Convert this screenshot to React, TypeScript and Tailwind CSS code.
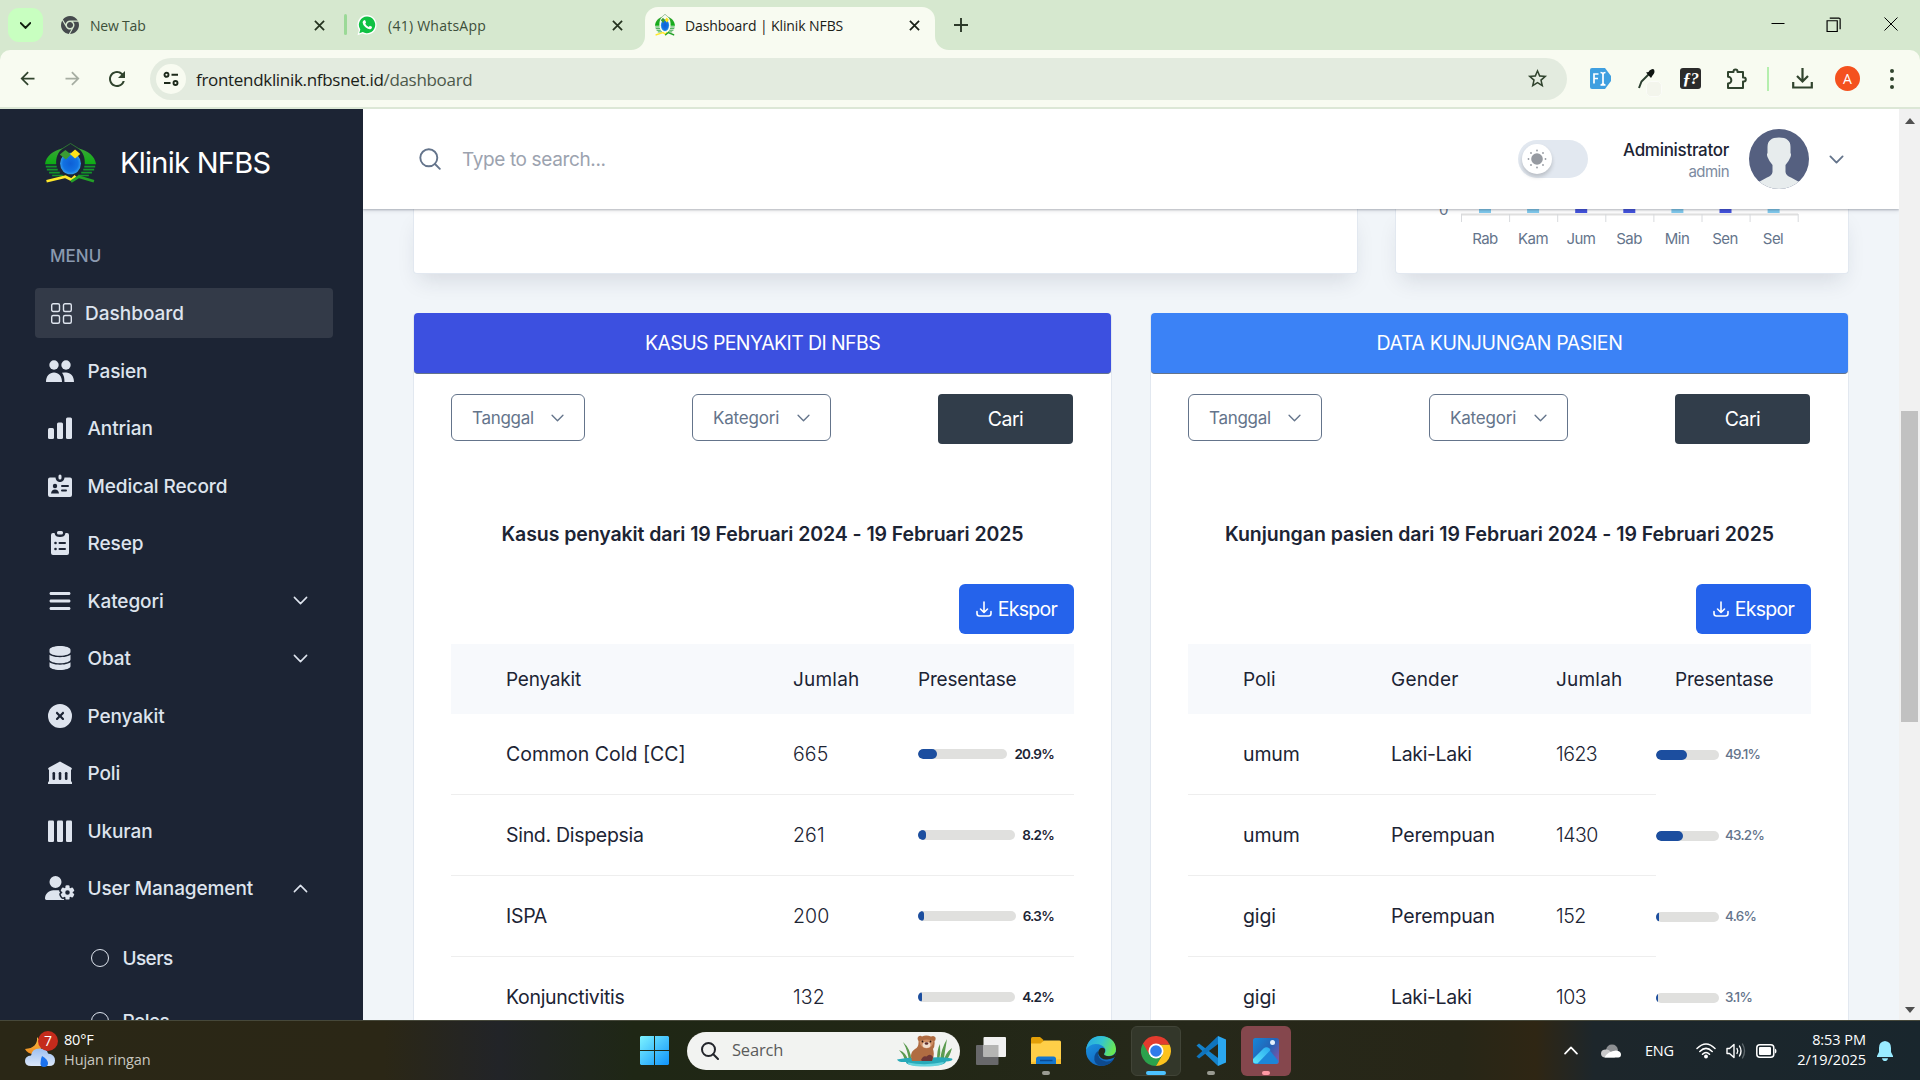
import type { ReactNode } from 'react';
import { FaBars, FaCircleXmark, FaDatabase, FaUserGear, FaChrome } from 'react-icons/fa6';
import { MdArrowBack, MdArrowForward, MdRefresh, MdStarBorder } from 'react-icons/md';

/* ---------- shared drawings ---------- */

function ClinicLogo({ className }: { className: string }) {
  return (
    <svg viewBox="0 0 50 40" preserveAspectRatio="none" className={className}>
      <defs>
        <radialGradient id="drop" cx="50%" cy="50%" r="60%">
          <stop offset="0%" stopColor="#0d5fd6" />
          <stop offset="60%" stopColor="#1272e2" />
          <stop offset="100%" stopColor="#4dbcf5" />
        </radialGradient>
        <linearGradient id="wing" x1="0" y1="0" x2="0" y2="1">
          <stop offset="0" stopColor="#3aa636" />
          <stop offset="1" stopColor="#0cae14" />
        </linearGradient>
      </defs>
      <path d="M25 0.500 L14 7.500 M25 0.500 L36 7.500" stroke="#2f7a33" strokeWidth="0.9" fill="none" />
      <path d="M17 5.500 C8 7.500 1 13 0 21.300 H11 C10.500 15 12.500 9.500 17 5.500Z" fill="url(#wing)" />
      <path d="M33 5.500 C42 7.500 49 13 50 21.300 H39 C39.500 15 37.500 9.500 33 5.500Z" fill="url(#wing)" />
      <path d="M0.800 23.600H11.500M1.800 26.600H12.500M4 29.600H14.500M7 32.500H17.500" stroke="#14962a" strokeWidth="1.700" />
      <path d="M49.200 23.600H38.500M48.200 26.600H37.500M46 29.600H35.500M43 32.500H32.500" stroke="#14962a" strokeWidth="1.700" />
      <ellipse cx="25" cy="20.500" rx="10.200" ry="10.800" fill="url(#drop)" />
      <path d="M20 7 L25.500 11.500 L20.500 16.500 L14.500 11.500Z" fill="#3b9c34" />
      <path d="M29.500 6.500 L34.500 11 L29.500 15.500 L24.500 11Z" fill="#ffe21a" />
      <path d="M1.500 38.300 L20 33.800 L26 36.800 L30 33" stroke="#ffe92b" strokeWidth="2.700" fill="none" />
      <path d="M25.500 38.600 L33 33.800 L48 38.300" stroke="#23a127" strokeWidth="2.700" fill="none" />
    </svg>
  );
}

function Chevron({ className, up = false, stroke = 1.7 }: { className: string; up?: boolean; stroke?: number }) {
  return (
    <svg viewBox="0 0 16 10" className={className} fill="none" stroke="currentColor" strokeWidth={stroke} strokeLinecap="round" strokeLinejoin="round">
      <path d={up ? 'M1.200 8.500L8 1.500L14.800 8.500' : 'M1.200 1.500L8 8.500L14.800 1.500'} />
    </svg>
  );
}

function Cross({ className }: { className: string }) {
  return (
    <svg viewBox="0 0 12 12" className={className} stroke="currentColor" strokeWidth="1.9" fill="none">
      <path d="M1 1L11 11M11 1L1 11" />
    </svg>
  );
}

/* ---------- browser chrome ---------- */

function TabStrip() {
  return (
    <div className="flex h-[50px] shrink-0 bg-[#d6e8cf] font-['Open_Sans',sans-serif] text-[14px] text-[#3d4f3a]">
      <div className="mt-2 ml-2 flex h-[34px] w-[35px] items-center justify-center rounded-[11px] bg-[#c8ffc0] text-[#101f0e]">
        <Chevron className="h-[7px] w-[11px]" stroke={3} />
      </div>
      <div className="flex h-[50px] w-[301px] items-center pl-[18px]">
        <FaChrome className="size-[18px] text-[#454a4d]" />
        <span className="ml-[11px] w-[224px] tracking-[-0.2px]">New Tab</span>
        <Cross className="size-[11px] text-[#24331f]" />
      </div>
      <div className="mt-[14px] h-[21px] w-[3px] rounded bg-[#9bd997]" />
      <div className="flex h-[50px] w-[298px] items-center pl-[10px]">
        <svg viewBox="0 0 20 22" className="h-[22px] w-5">
          <path d="M10 1A9.500 9.800 0 1 1 5.500 19.400L0.500 21.300L1.900 16A9.500 9.800 0 0 1 10 1Z" fill="#fff" />
          <path d="M10 2.400A8.200 8.400 0 1 1 5.800 18L2.300 19.300L3.300 15.500A8.200 8.400 0 0 1 10 2.400Z" fill="#10c143" />
          <path d="M6.700 6.500Q7.700 5.600 8.300 6.600L9 8.300Q9 9 8.200 9.700Q9.500 12 11.800 13Q12.800 11.700 13.300 11.900L15 12.800Q15.300 14.500 13.500 15.200Q11.500 15.700 8.500 13.200Q5.500 10.300 5.600 8.500Q5.800 7.200 6.700 6.500Z" fill="#fff" />
        </svg>
        <span className="ml-[11px] w-[224px] tracking-[0.25px]">(41) WhatsApp</span>
        <Cross className="size-[11px] text-[#24331f]" />
      </div>
      <div className="relative mt-[7px] flex h-[43px] w-[290px] items-center rounded-t-[13px] bg-[#f8fbf1] pb-[7px] pl-[10px] text-[#1a2118]">
        <svg viewBox="0 0 14 14" className="absolute bottom-0 -left-[14px] size-[14px]"><path d="M14 0V14H0A14 14 0 0 0 14 0Z" fill="#f8fbf1" /></svg>
        <svg viewBox="0 0 14 14" className="absolute -right-[14px] bottom-0 size-[14px]"><path d="M0 0V14H14A14 14 0 0 1 0 0Z" fill="#f8fbf1" /></svg>
        <ClinicLogo className="h-[22px] w-5" />
        <span className="ml-[10px] w-[224px] tracking-[-0.1px] whitespace-nowrap">Dashboard | Klinik NFBS</span>
        <Cross className="size-[11px]" />
      </div>
      <svg viewBox="0 0 14 14" className="mt-[18px] ml-[19px] size-[14px]" stroke="#2c3a29" strokeWidth="1.9"><path d="M7 0V14M0 7H14" /></svg>
      <div className="ml-auto flex h-12 items-center pr-[22px] text-[#111]">
        <svg viewBox="0 0 14 14" className="mr-[41px] size-[14px]" stroke="#000" strokeWidth="1"><path d="M0.500 6.500H13.500" /></svg>
        <svg viewBox="0 0 14 14" className="mr-[43px] size-[15px]" stroke="#000" strokeWidth="1.100" fill="none"><path d="M1 3.500H10.500V13.500H1ZM3.500 1H12A1.200 1.200 0 0 1 13.200 2.200V11.500" /></svg>
        <svg viewBox="0 0 14 14" className="size-[14px]" stroke="#000" strokeWidth="1"><path d="M0.500 0.500L13.500 13.500M13.500 0.500L0.500 13.500" /></svg>
      </div>
    </div>
  );
}

function Toolbar() {
  return (
    <div className="h-[59px] shrink-0 bg-[#d6e8cf]">
      <div className="flex h-[59px] items-center rounded-t-[10px] border-b-2 border-[#dce7d6] bg-[#f8fbf1] font-['Open_Sans',sans-serif] text-[#31442e]">
        <MdArrowBack className="ml-[17px] size-[21px]" />
        <MdArrowForward className="ml-6 size-[21px] text-[#a6ada2]" />
        <MdRefresh className="ml-[22px] size-[24px]" />
        <div className="ml-[21px] flex h-[42px] w-[1417px] items-center rounded-full bg-[#e3ebdf] pl-[6px]">
          <div className="flex size-[30px] items-center justify-center rounded-full bg-[#f8fbf1]">
            <svg viewBox="0 0 16 16" className="size-4" stroke="#1d2a1b" strokeWidth="1.900" fill="none">
              <circle cx="3.500" cy="3.800" r="2" /><path d="M8.500 3.800H15M1 12H7.500" /><circle cx="12.500" cy="12" r="2" />
            </svg>
          </div>
          <span className="ml-[10px] pt-[2px] text-[17px] tracking-[-0.31px] whitespace-nowrap text-[#1a2118]">frontendklinik.nfbsnet.id<span className="text-[#4c584a]">/dashboard</span></span>
          <MdStarBorder className="mr-[18px] ml-auto size-[23px]" />
        </div>
        <svg viewBox="0 0 21 21" className="ml-[23px] size-[21px]">
          <path d="M2 0H15L21 8V13L15 21H2A2 2 0 0 1 0 19V2A2 2 0 0 1 2 0Z" fill="#3f9fe0" />
          <path d="M4 15.500V6H8.500M4 10.500H8M10.500 4.500Q13 4.500 13 6.500V15Q13 17 10.500 17M15.500 4.500Q13 4.500 13 6.500M15.500 17Q13 17 13 15" stroke="#fff" strokeWidth="1.700" fill="none" />
        </svg>
        <div className="relative ml-[27px] h-[21px] w-[19px]">
          <svg viewBox="0 0 19 21" className="h-[21px] w-[19px]">
            <path d="M12 5L3.500 13.500L1 20" stroke="#2c3f30" strokeWidth="2" fill="none" />
            <path d="M8 4.500L13 10L14.500 7.500Q17.500 4.500 16 1.500Q14.500 0 11.500 2.500L10.500 4Z" fill="#101512" />
          </svg>
          <div className="absolute top-[13px] left-[8px] size-[16px] rounded-[5px] border border-[#fbfcf8] bg-[#f3f5ec]" />
        </div>
        <div className="ml-[23px] flex size-[21px] items-center justify-center rounded-[3px] bg-[#2b2b2b] font-['Liberation_Serif',serif] text-[17px] leading-none font-bold tracking-[-0.5px] text-white italic">ƒ?</div>
        <svg viewBox="0 0 22 22" className="ml-[25px] size-[22px]" fill="none" stroke="currentColor" strokeWidth="2" strokeLinejoin="round">
          <path d="M2 4H7.500V3.500A1.800 1.800 0 0 1 11.500 3.500V4H17V9.500H17.800A1.900 1.900 0 0 1 17.800 13.500H17V20H2V15.500A3.200 3.200 0 0 0 2 8.800Z" />
        </svg>
        <div className="ml-[19px] h-6 w-[2px] bg-[#b5efae]" />
        <svg viewBox="0 0 21 21" className="ml-[23px] size-[21px]" fill="none" stroke="currentColor" strokeWidth="2.200">
          <path d="M10.500 0V13M5 8L10.500 13.500L16 8M1.200 14V19.500H19.800V14" />
        </svg>
        <div className="ml-[22px] flex size-[25px] items-center justify-center rounded-full bg-[#f4511e] text-[14px] leading-none text-white">A</div>
        <svg viewBox="0 0 4 20" className="ml-[30px] h-[20px] w-[4px]" fill="currentColor"><circle cx="2" cy="2" r="2" /><circle cx="2" cy="10" r="2" /><circle cx="2" cy="18" r="2" /></svg>
      </div>
    </div>
  );
}

/* ---------- sidebar ---------- */

const menuIcons: Record<string, ReactNode> = {
  Pasien: (
    <svg viewBox="0 0 28 24" className="h-6 w-7" fill="currentColor">
      <circle cx="8" cy="6" r="4.700" /><circle cx="20" cy="6" r="4.700" />
      <path d="M0 23C0 17 3.500 13.500 8 13.500S16 17 16 23ZM16 13.800Q18 13.200 20 13.500C24.500 13.500 28 17 28 23H18.500Q18.500 17 16 13.800Z" />
    </svg>
  ),
  Antrian: (
    <svg viewBox="0 0 24 24" className="size-6" fill="currentColor"><rect x="0" y="12" width="6" height="11" rx="1.500" /><rect x="9" y="6.500" width="6" height="16.500" rx="1.500" /><rect x="18" y="1.500" width="6" height="21.500" rx="1.500" /></svg>
  ),
  'Medical Record': (
    <svg viewBox="0 0 24 24" className="size-6">
      <path fill="currentColor" d="M2 3.500H7.500C8 7 10 8 12 8S16 7 16.500 3.500H22A2 2 0 0 1 24 5.500V21A2 2 0 0 1 22 23H2A2 2 0 0 1 0 21V5.500A2 2 0 0 1 2 3.500Z" />
      <rect x="10.500" y="0.500" width="3" height="5" rx="1.500" fill="currentColor" />
      <g fill="#1c2434"><circle cx="7" cy="12" r="2.200" /><path d="M3 19.500Q3.500 15.500 7 15.500T11 19.500Z" /><rect x="13" y="11" width="8" height="2" rx="1" /><rect x="13" y="15.500" width="6" height="2" rx="1" /></g>
    </svg>
  ),
  Resep: (
    <svg viewBox="0 0 18 24" className="h-6 w-[18px]">
      <path fill="currentColor" d="M2 2H3.500C4 5 6 6 9 6S14 5 14.500 2H16A2 2 0 0 1 18 4V22A2 2 0 0 1 16 24H2A2 2 0 0 1 0 22V4A2 2 0 0 1 2 2Z" />
      <rect x="6" y="0" width="6" height="3.600" rx="1.500" fill="currentColor" />
      <g fill="#1c2434"><circle cx="4.500" cy="12" r="1.300" /><circle cx="4.500" cy="18" r="1.300" /><rect x="7.500" y="11" width="7.500" height="2" rx="1" /><rect x="7.500" y="17" width="7.500" height="2" rx="1" /></g>
    </svg>
  ),
  Kategori: <FaBars className="size-6" />,
  Obat: <FaDatabase className="size-6" />,
  Penyakit: <FaCircleXmark className="size-6" />,
  Poli: (
    <svg viewBox="0 0 24 24" className="size-6">
      <path fill="currentColor" d="M12 0.500L23 6.500Q24 7 24 8.500H23V20L24 21.500V23H0V21.500L1 20V8.500H0Q0 7 1 6.500Z" />
      <g fill="#1c2434"><rect x="4.500" y="11" width="2.600" height="8" rx="1.200" /><rect x="10.700" y="11" width="2.600" height="8" rx="1.200" /><rect x="16.900" y="11" width="2.600" height="8" rx="1.200" /></g>
    </svg>
  ),
  Ukuran: (
    <svg viewBox="0 0 24 24" className="size-6" fill="currentColor"><rect x="0" y="1.500" width="6" height="21.500" rx="1.200" /><rect x="9" y="1.500" width="6" height="21.500" rx="1.200" /><rect x="18" y="1.500" width="6" height="21.500" rx="1.200" /></svg>
  ),
  'User Management': <FaUserGear className="h-6 w-[30px]" />,
};

const expandable: Record<string, 'down' | 'up'> = { Kategori: 'down', Obat: 'down', 'User Management': 'up' };

function Sidebar() {
  return (
    <aside className="h-full w-[363px] shrink-0 overflow-hidden bg-[#1c2434] font-['Inter',sans-serif] text-[#dee4ee]">
      <div className="flex h-[107px] items-center pl-[45px]">
        <ClinicLogo className="h-10 w-[51px]" />
        <span className="ml-[24px] text-[29px] tracking-[-0.720px] text-white">Klinik NFBS</span>
      </div>
      <div className="mt-[28px] pl-[50px] text-[17px] leading-[24px] font-medium tracking-[0.050px] text-[#8a99af]">MENU</div>
      <ul className="mt-[20px] ml-[35px] flex w-[298px] flex-col gap-[7.500px] text-[19px] leading-none font-medium tracking-[-0.100px] whitespace-nowrap">
        <li className="flex h-[50px] items-center rounded-sm bg-[#333a48] pl-4">
          <svg viewBox="0 0 21 21" className="size-[21px]" fill="none" stroke="currentColor" strokeWidth="1.400">
            <rect x="0.700" y="0.700" width="7.800" height="7.800" rx="1.500" /><rect x="12.500" y="0.700" width="7.800" height="7.800" rx="1.500" />
            <rect x="0.700" y="12.500" width="7.800" height="7.800" rx="1.500" /><rect x="12.500" y="12.500" width="7.800" height="7.800" rx="1.500" />
          </svg>
          <span className="ml-[13px] tracking-normal">Dashboard</span>
        </li>
        {Object.entries(menuIcons).map(([name, icon]) => (
          <li key={name} className="flex h-[50px] items-center pl-[10px]">
            <span className="flex w-[30px] justify-center">{icon}</span>
            <span className="ml-[12.500px] pt-[1.500px]">{name}</span>
            {expandable[name] && <Chevron className="mr-[25px] ml-auto h-[9px] w-[15px]" up={expandable[name] === 'up'} />}
          </li>
        ))}
        {['Users', 'Roles'].map((name) => (
          <li key={name} className="mt-[12px] flex h-[50px] items-center pl-[56px] last:mt-[6px]">
            <span className="size-[18px] rounded-full border-[1.500px] border-current" />
            <span className="ml-[13.500px] pt-[1.500px] tracking-[-0.600px]">{name}</span>
          </li>
        ))}
      </ul>
    </aside>
  );
}

/* ---------- page ---------- */

function Header() {
  return (
    <header className="relative z-10 flex h-[100px] shrink-0 items-center bg-white pl-[56px] shadow-[0_1px_2px_rgba(30,41,59,0.300),0_3px_4px_rgba(30,41,59,0.060)]">
      <svg viewBox="0 0 22 22" className="size-[22px]" fill="none" stroke="#64748b" strokeWidth="1.900" strokeLinecap="round"><circle cx="9.800" cy="9.800" r="8.500" /><path d="M16 16L20.800 20.800" /></svg>
      <span className="ml-[21px] pt-[2px] text-[19px] tracking-[-0.370px] text-[#9ca3af]">Type to search...</span>
      <div className="ml-auto flex h-[38px] w-[70px] items-center rounded-full bg-[#e2e8f0] pl-1">
        <div className="flex size-[30px] items-center justify-center rounded-full bg-white shadow-[0_3px_4px_rgba(0,0,0,0.180)]">
          <svg viewBox="0 0 20 20" className="size-5" fill="#969aa1">
            <circle cx="10" cy="10" r="5.800" />
            <circle cx="10" cy="1.500" r="0.900" /><circle cx="10" cy="18.500" r="0.900" /><circle cx="1.500" cy="10" r="0.900" /><circle cx="18.500" cy="10" r="0.900" />
            <circle cx="4" cy="4" r="0.900" /><circle cx="16" cy="4" r="0.900" /><circle cx="4" cy="16" r="0.900" /><circle cx="16" cy="16" r="0.900" />
          </svg>
        </div>
      </div>
      <div className="ml-[35px] flex flex-col items-end">
        <span className="text-[17px] leading-[24px] font-medium tracking-[-0.300px] text-[#1c2434]">Administrator</span>
        <span className="text-[15px] leading-[19px] tracking-[-0.550px] text-[#7c8aa0]">admin</span>
      </div>
      <svg viewBox="0 0 60 60" className="ml-5 size-[60px]">
        <defs><clipPath id="avatar"><circle cx="30" cy="30" r="30" /></clipPath></defs>
        <g clipPath="url(#avatar)">
          <rect width="60" height="60" fill="#556080" />
          <path d="M18.500 18Q18.500 8.500 30 8.500T41.500 18V24Q42.500 25 41.500 28Q40 32 36.500 36V43Q37 46.500 42 48.500L52 54V60H8V54L18 48.500Q23 46.500 23.500 43V36Q20 32 18.500 28Q17.500 25 18.500 24Z" fill="#e7eced" />
        </g>
      </svg>
      <Chevron className="mr-[55px] ml-[20px] h-[9px] w-[15px] text-[#64748b]" stroke={2} />
    </header>
  );
}

const days: [string, boolean][] = [['Rab', false], ['Kam', false], ['Jum', true], ['Sab', true], ['Min', false], ['Sen', true], ['Sel', false]];

function ChartFoot() {
  return (
    <div className="flex h-full flex-col pl-[43px]">
      <div className="flex h-[14px]">
        <div className="flex w-[22px] items-end overflow-hidden text-[15px] leading-[12px] text-[#64748b]"><span className="-mt-2 mb-[7px]">0</span></div>
        <svg viewBox="0 0 338 14" className="h-[14px] w-[338px]">
          {days.map(([d, dark], i) => <rect key={d} x={18 + i * 48.1} y="0" width="12" height="4" fill={dark ? '#4453de' : '#80caee'} />)}
          <path d="M0 5.500H337" stroke="#e0e0e0" strokeWidth="2" />
          {[0, 1, 2, 3, 4, 5, 6, 7].map((i) => <path key={i} d={`M${0.5 + i * 48.1} 5V13`} stroke="#d8dadd" />)}
        </svg>
      </div>
      <div className="mt-[6px] ml-[22px] grid w-[336px] grid-cols-7 text-center text-[15px] leading-5 tracking-[-0.550px] text-[#64748b]">
        {days.map(([d]) => <span key={d}>{d}</span>)}
      </div>
    </div>
  );
}

function ExportIcon() {
  return (
    <svg viewBox="0 0 16 16" className="size-4" fill="none" stroke="currentColor" strokeWidth="1.600" strokeLinecap="round" strokeLinejoin="round">
      <path d="M8 1V11.300M4.500 8L8 11.500L11.500 8M1 10.500V12.500Q1 15 3.500 15H12.500Q15 15 15 12.500V10.500" />
    </svg>
  );
}

function ReportCard({ title, headClass, caption, captionClass, children }: { title: string; headClass: string; caption: string; captionClass: string; children: ReactNode }) {
  return (
    <section className="h-[760px] w-[699px] rounded-sm border-x border-[#e2e8f0] bg-white">
      <h2 className={headClass}>{title}</h2>
      <div className="mx-[37px] mt-[20px]">
        <div className="flex h-[50px] items-start justify-between pr-px">
          <button className="flex h-[47px] w-[134px] items-center justify-between rounded-md border border-[#64748b] px-5 text-[17px] tracking-[-0.300px] text-[#64748b]">
            <span className="pt-[2px]">Tanggal</span> <Chevron className="h-[8px] w-[13px]" />
          </button>
          <button className="flex h-[47px] w-[139px] items-center justify-between rounded-md border border-[#64748b] px-5 text-[17px] tracking-[-0.200px] text-[#64748b]">
            <span className="pt-[2px]">Kategori</span> <Chevron className="h-[8px] w-[13px]" />
          </button>
          <button className="h-[50px] w-[135px] rounded-[4px] bg-[#313d4a] pt-[2px] text-[19.500px] tracking-[-0.540px] text-white">Cari</button>
        </div>
        <p className={captionClass}>{caption}</p>
        <div className="mt-[36px] flex justify-end">
          <button className="flex h-[50px] w-[115px] items-center justify-center gap-[6px] rounded-[6px] bg-[#2563eb] text-[19.500px] tracking-[-0.700px] text-white"><ExportIcon /><span className="pt-px">Ekspor</span></button>
        </div>
        <div className="mt-[10px] text-[#1c2434]">{children}</div>
      </div>
    </section>
  );
}

function Meter({ value }: { value: number }) {
  return (
    <div className="h-[10px] flex-1 overflow-hidden rounded-full bg-[#e0e0de]">
      <div className="h-full rounded-full bg-[#1c4e9f]" style={{ width: `${value}%` }} />
    </div>
  );
}

const diseases: [string, string, number, string][] = [
  ['Common Cold [CC]', '665', 20.9, 'tracking-[0px]'],
  ['Sind. Dispepsia', '261', 8.2, 'tracking-[-0.300px]'],
  ['ISPA', '200', 6.3, 'tracking-[-0.300px]'],
  ['Konjunctivitis', '132', 4.2, 'tracking-[-0.300px]'],
];

const visits: [string, string, string, number, string][] = [
  ['umum', 'Laki-Laki', '1623', 49.1, 'tracking-[-0.350px]'],
  ['umum', 'Perempuan', '1430', 43.2, 'tracking-[-0.150px]'],
  ['gigi', 'Perempuan', '152', 4.6, 'tracking-[-0.150px]'],
  ['gigi', 'Laki-Laki', '103', 3.1, 'tracking-[-0.350px]'],
];

function DiseaseTable() {
  return (
    <>
      <div className="flex h-[70px] items-center bg-[#f7f9fc] pt-[2px] pl-[55px] text-[19px]">
        <span className="w-[287px] tracking-[-0.200px]">Penyakit</span>
        <span className="w-[125px] tracking-[0.200px]">Jumlah</span>
        <span className="tracking-[-0.200px]">Presentase</span>
      </div>
      {diseases.map(([name, count, share, tracking]) => (
        <div key={name} className="flex h-[81px] items-center border-b border-[#eeeeee] pr-[20px] pl-[55px] text-[19.500px]">
          <span className="w-[287px] pt-px"><span className={tracking}>{name}</span></span>
          <span className="w-[125px] pt-px font-light tracking-[0.100px]">{count}</span>
          <div className="flex flex-1 items-center gap-[7px] text-[13.500px] font-semibold tracking-[-0.750px]"><Meter value={share} />{share}%</div>
        </div>
      ))}
    </>
  );
}

function VisitTable() {
  return (
    <>
      <div className="flex h-[70px] items-center bg-[#f7f9fc] pt-[2px] pl-[55px] text-[19px]">
        <span className="w-[148px] tracking-[-0.050px]">Poli</span>
        <span className="w-[165px] tracking-[0.200px]">Gender</span>
        <span className="w-[119px] tracking-[0.200px]">Jumlah</span>
        <span className="tracking-[-0.200px]">Presentase</span>
      </div>
      {visits.map(([poli, gender, count, share, tracking]) => (
        <div key={gender + count} className="flex h-[81px] text-[19.500px]">
          <div className="flex w-[468px] items-center border-b border-[#eeeeee] pt-px pl-[55px]">
            <span className="w-[148px] tracking-[-0.150px]">{poli}</span>
            <span className="w-[165px]"><span className={tracking}>{gender}</span></span>
            <span className="font-light tracking-[-0.500px]">{count}</span>
          </div>
          <div className="flex items-center gap-[6px] text-[13.500px] font-medium tracking-[-0.750px] text-[#64748b]">
            <div className="flex w-[63px]"><Meter value={share} /></div>{share}%
          </div>
        </div>
      ))}
    </>
  );
}

function PageBody() {
  return (
    <main className="flex h-full w-[1536px] flex-col overflow-hidden bg-[#f1f5f9] font-['Inter',sans-serif]">
      <Header />
      <div className="flex shrink-0 justify-between pr-[50px] pl-[50px]">
        <div className="h-[65px] w-[945px] rounded-b-sm border border-t-0 border-[#e2e8f0] bg-white shadow-[0_12px_22px_-6px_rgba(30,41,59,0.130)]" />
        <div className="h-[65px] w-[454px] rounded-b-sm border border-t-0 border-[#e2e8f0] bg-white shadow-[0_12px_22px_-6px_rgba(30,41,59,0.130)]"><ChartFoot /></div>
      </div>
      <div className="mt-[39px] flex justify-between pr-[50px] pl-[50px]">
        <ReportCard
          title="KASUS PENYAKIT DI NFBS"
          headClass="flex h-[61px] items-center justify-center rounded-[4px] border-b border-[#64748b] bg-[#3c50e0] pt-[2px] text-[19.500px] tracking-[-0.600px] text-white"
          caption="Kasus penyakit dari 19 Februari 2024 - 19 Februari 2025"
          captionClass="mt-[76px] text-center text-[19.500px] leading-[28px] font-semibold tracking-[-0.080px] text-[#1c2434]"
        >
          <DiseaseTable />
        </ReportCard>
        <ReportCard
          title="DATA KUNJUNGAN PASIEN"
          headClass="flex h-[61px] items-center justify-center rounded-[4px] border-b border-[#64748b] bg-[#3b82f6] pt-[2px] text-[19.500px] tracking-[-0.390px] text-white"
          caption="Kunjungan pasien dari 19 Februari 2024 - 19 Februari 2025"
          captionClass="mt-[76px] text-center text-[19.500px] leading-[28px] font-semibold tracking-[-0.040px] text-[#1c2434]"
        >
          <VisitTable />
        </ReportCard>
      </div>
    </main>
  );
}

function Scrollbar() {
  return (
    <div className="flex h-full w-[21px] flex-col items-center bg-[#f1f1f1]">
      <svg viewBox="0 0 10 6" className="mt-[9px] h-[6px] w-[10px]" fill="#505050"><path d="M0 6L5 0L10 6Z" /></svg>
      <div className="mt-[287px] h-[311px] w-[17px] bg-[#c1c1c1]" />
      <svg viewBox="0 0 10 6" className="mt-auto mb-[7px] h-[6px] w-[10px]" fill="#505050"><path d="M0 0L5 6L10 0Z" /></svg>
    </div>
  );
}

/* ---------- taskbar ---------- */

function AppSlot({ children, slot, mark }: { children: ReactNode; slot: string; mark: string }) {
  return (
    <div className={slot}>
      {children}
      <span className={mark} />
    </div>
  );
}

function Taskbar() {
  const plain = 'relative flex h-[50px] w-[50px] items-center justify-center rounded-[6px]';
  const dot = 'absolute bottom-[1px] left-[21px] h-[4px] w-[8px] rounded-full bg-[#9a9b92]';
  return (
    <footer className="flex h-[60px] shrink-0 items-center border-t border-[#46483a] bg-[linear-gradient(90deg,#2a2716_0%,#2b2716_20%,#222428_26%,#1f2715_33%,#222716_48%,#26281a_62%,#272617_76%,#2f2614_80%,#1d262b_83%,#19262d_100%)] font-['Open_Sans',sans-serif] text-white">
      <div className="relative ml-6 h-[34px] w-[32px]">
        <svg viewBox="0 0 32 34" className="h-[34px] w-8">
          <defs>
            <linearGradient id="cloud" x1="0" y1="0" x2="0" y2="1"><stop offset="0" stopColor="#9dbff0" /><stop offset="1" stopColor="#dbe7fa" /></linearGradient>
            <linearGradient id="moon" x1="0" y1="0" x2="0" y2="1"><stop offset="0" stopColor="#f5c04a" /><stop offset="1" stopColor="#f08a1c" /></linearGradient>
          </defs>
          <path d="M13 3Q14 14 1 15Q4 21 12 20Q19 17 17 8Z" fill="url(#moon)" />
          <path d="M7 32Q1 32 1 27T7 21.500Q8 14.500 15.500 14.500T24 19.500Q31 20.500 31 26.500T24 32Z" fill="url(#cloud)" />
          <path d="M18 22Q24 25 24 30Q23.500 33 20 33T16.500 29.500Q16.500 25 18 22Z" fill="#1b72f0" />
        </svg>
        <span className="absolute -top-[3px] left-[14px] flex size-[20px] items-center justify-center rounded-full bg-[#c42b1c] text-[14px] leading-none">7</span>
      </div>
      <div className="ml-2 w-[576px] pb-[2px] text-[14.500px] leading-[20px]">
        <div className="tracking-[-0.200px]">80°F</div>
        <div className="tracking-[-0.050px] text-[#c9c8c0]">Hujan ringan</div>
      </div>
      <svg viewBox="0 0 29 29" className="size-[29px]">
        <defs><linearGradient id="win" x1="0" y1="0" x2="1" y2="1"><stop offset="0" stopColor="#7df3ff" /><stop offset="1" stopColor="#0f93fb" /></linearGradient></defs>
        <path d="M1 0H14V14H0V1ZM15 0H28L29 1V14H15ZM0 15H14V29H1L0 28ZM15 15H29V28L28 29H15Z" fill="url(#win)" />
      </svg>
      <div className="ml-[18px] flex h-[38px] w-[273px] items-center rounded-full bg-[#f2f3f1] pl-[14px] text-[#5b5b5b]">
        <svg viewBox="0 0 18 18" className="size-[18px]" fill="none" stroke="#23252b" strokeWidth="2" strokeLinecap="round"><circle cx="7.500" cy="7.500" r="6.500" /><path d="M12.300 12.300L17 17" /></svg>
        <span className="ml-[13px] text-[16.500px] tracking-[-0.200px]">Search</span>
        <svg viewBox="0 0 56 32" className="mr-[7px] ml-auto h-8 w-14">
          <path d="M12 26Q11 16 6 7Q14 14 14.500 26ZM8 25Q6 19 2 15Q10 18 11 26ZM43 26Q44 14 50 4Q48 16 46.500 26ZM47 26Q48 18 55 13Q53 21 49 26ZM40 25Q40 14 43 9Q44 18 42 26Z" fill="#5c9b50" />
          <path d="M0 24.500Q14 21.500 28 23Q44 21.500 55 23.500Q57 26 49 26.500Q48 31 28 31T9 27Q1 27.500 0 24.500Z" fill="#27a9b8" />
          <path d="M11 27.500Q28 31 47 27Q46 31.500 28 31.500T11 27.500Z" fill="#63d3dc" />
          <path d="M21 2Q23 0 25 1.500Q29 -0.500 34 1.500Q37 0 38.500 2.500Q39 5 37.500 6Q38 12 36 14Q38 20 35 26H15Q12 18 18 14Q22 12 21.500 6Q20 4 21 2Z" fill="#b06c42" />
          <path d="M22.500 6Q23 13 29.500 13.500Q36 13 36.500 6Q30 3 22.500 6Z" fill="#cf8f64" />
          <ellipse cx="29.500" cy="10" rx="4" ry="3" fill="#f0ddcc" /><ellipse cx="29.500" cy="8.500" rx="1.800" ry="1.300" fill="#5b2b2a" />
          <circle cx="25.500" cy="6.500" r="0.900" fill="#2b1412" /><circle cx="33.500" cy="6.500" r="0.900" fill="#2b1412" />
          <path d="M24 25Q26 20 29.500 21.500Q33 18 36 22L35 26H25Z" fill="#6d3637" />
        </svg>
      </div>
      <svg viewBox="0 0 30 28" className="ml-4 h-[28px] w-[30px]">
        <rect x="0" y="8" width="22.500" height="20" rx="1" fill="#68686a" />
        <rect x="7.500" y="0" width="22.500" height="20" rx="1" fill="#f1f1f1" />
        <rect x="7.500" y="8" width="15" height="12" fill="#b5b5b3" />
      </svg>
      <div className="ml-[15px] flex gap-[5px]">
        <AppSlot slot={plain} mark={dot}>
          <svg viewBox="0 0 30 28" className="h-[28px] w-[30px]">
            <path d="M0 1.500Q0 0 1.500 0H9L12.500 3V8H0Z" fill="#e3a008" />
            <path d="M0 6.500H9.500L13 3.500H28.500Q30 3.500 30 5V27H0Z" fill="#ffcf48" />
            <path d="M0 25L30 22V27H0Z" fill="#f8bf30" />
            <path d="M5 27V22Q5 19.500 7.500 19.500H22.500Q25 19.500 25 22V27Z" fill="#1477cf" /><path d="M9 23.500H21.500" stroke="#0a4a94" strokeWidth="1.500" />
          </svg>
        </AppSlot>
        <AppSlot slot={plain} mark="hidden">
          <svg viewBox="0 0 30 30" className="size-[30px]">
            <defs>
              <linearGradient id="edgeA" x1="0" y1="0.200" x2="1" y2="0.500"><stop offset="0" stopColor="#27a8e6" /><stop offset="0.500" stopColor="#33c5d0" /><stop offset="1" stopColor="#6be850" /></linearGradient>
              <linearGradient id="edgeB" x1="0" y1="0" x2="0.600" y2="1"><stop offset="0" stopColor="#1c9be6" /><stop offset="1" stopColor="#1165c0" /></linearGradient>
            </defs>
            <circle cx="15" cy="15" r="15" fill="url(#edgeB)" />
            <path d="M0 14Q2 0 15 0Q29 1 30 13Q30 19.500 23 20Q18 20 18 18Q20 16 19.500 13.500Q17 8 9.500 8Q3 8.500 0 14Z" fill="url(#edgeA)" />
            <path d="M12 15Q11 24 20 25.500Q24 26 28 23Q24 30 15 30Q7 28 8.500 20Q9 17 12 15Z" fill="#0d4a8f" />
            <path d="M14 12.500Q11.500 15 12.500 18.500Q15 24 21 23.500Q25 23 28.300 21.500Q30 20 30 17V20.500L28 23Q30.500 21 30 24V16Q28 20.200 23 20.200Q18 20 18 18Q20 15 18.500 12.500Q16 11 14 12.500Z" fill="#26271a" />
          </svg>
        </AppSlot>
        <AppSlot slot="relative flex h-[50px] w-[50px] items-center justify-center rounded-[6px] border border-[#414437] bg-[#33372a]" mark="absolute bottom-0 left-[14px] h-[4px] w-[20px] rounded-full bg-[#4cc2ff]">
          <svg viewBox="0 0 30 30" className="size-[30px]">
            <path d="M15 15L2 7.500A15 15 0 0 0 15 30L21.500 18.700Z" fill="#2ba24c" />
            <path d="M15 8.500H28.500A15 15 0 0 1 15 30L21.500 18.700Z" fill="#fcc31e" />
            <path d="M2 7.500A15 15 0 0 1 28.500 8.500H15L8.500 18.700Z" fill="#e33b2e" />
            <circle cx="15" cy="15" r="7.500" fill="#fff" /><circle cx="15" cy="15" r="5.800" fill="#2f7bea" />
          </svg>
        </AppSlot>
        <AppSlot slot={plain} mark={dot}>
          <svg viewBox="0 0 30 30" className="size-[30px]">
            <path d="M0.500 9.500L3 7.500L24 23.500L22 30Z" fill="#1583cc" />
            <path d="M0.500 20.500L3 22.500L24 6.500L22 0Z" fill="#0f74bd" />
            <path d="M22 0L30 3.500V26.500L22 30Z" fill="#2ba7f0" />
          </svg>
        </AppSlot>
        <AppSlot slot="relative flex h-[50px] w-[50px] items-center justify-center rounded-[6px] bg-[#85474d]" mark="absolute bottom-[1px] left-[21px] h-[4px] w-[8px] rounded-full bg-[#ff99a4]">
          <svg viewBox="0 0 26 26" className="size-[26px]">
            <defs>
              <linearGradient id="ph" x1="0" y1="0" x2="1" y2="0.700"><stop offset="0" stopColor="#1687d8" /><stop offset="0.600" stopColor="#2463b5" /><stop offset="1" stopColor="#7656a8" /></linearGradient>
              <linearGradient id="phm" x1="0" y1="1" x2="1" y2="0"><stop offset="0" stopColor="#5ce6fb" /><stop offset="1" stopColor="#28a9ee" /></linearGradient>
            </defs>
            <rect width="26" height="26" rx="2.500" fill="url(#ph)" />
            <path d="M1 24.500L11.500 11Q13.500 9 15.500 11L25.500 23Q25 26 23 26H3Q1.500 26 1 24.500Z" fill="#1c86d8" />
            <path d="M0 21L10.500 10.500Q13.500 8 16.500 10.500L17.500 12L4.500 25.500H2.500Q0 25.500 0 23Z" fill="url(#phm)" />
            <circle cx="19.500" cy="4.500" r="2.500" fill="#e3f0fc" />
          </svg>
        </AppSlot>
      </div>
      <div className="ml-auto flex items-center">
        <Chevron className="h-[9px] w-[14px]" up stroke={2} />
        <svg viewBox="0 0 20 14" className="ml-[23px] h-[14px] w-5"><path d="M5 6Q6 0.500 11 0.500T17 6L16 10H5Z" fill="#8d8f92" /><path d="M4.500 13.500Q0 13.500 0 9.500T5 5.500Q8 5 10 8L14 13.500Z" fill="#c9c9ca" /><path d="M3.500 13.500Q7 7 15 6.500Q20 7 20 10.500T16.500 13.500Z" fill="#fff" /></svg>
        <span className="ml-[24px] w-[51px] text-[14.500px] tracking-[-0.250px]">ENG</span>
        <svg viewBox="0 0 20 16" className="h-4 w-5" fill="none" stroke="currentColor" strokeWidth="1.500" strokeLinecap="round"><path d="M1 5.500Q10 -3.500 19 5.500M3.800 8.500Q10 2.300 16.200 8.500M6.500 11.300Q10 7.800 13.500 11.300" /><circle cx="10" cy="13.500" r="1.200" fill="currentColor" /></svg>
        <svg viewBox="0 0 20 18" className="ml-[10px] h-[18px] w-5" fill="none" stroke="currentColor" strokeWidth="1.400" strokeLinecap="round" strokeLinejoin="round"><path d="M1 6.500H3.500L8 2.500V15.500L3.500 11.500H1ZM11 6.500Q12.500 9 11 11.500M13.500 4Q16.500 9 13.500 14" /><path d="M16.500 2Q20.500 9 16.500 16" stroke="#5d666b" /></svg>
        <svg viewBox="0 0 21 14" className="ml-[10px] h-[14px] w-[21px]"><rect x="0.800" y="0.800" width="17" height="12.400" rx="3" fill="none" stroke="#fff" strokeWidth="1.500" /><rect x="3" y="3" width="12" height="8" rx="1" fill="#fff" /><path d="M19 4.500Q20.500 5 20.500 7T19 9.500Z" fill="#fff" /></svg>
        <div className="ml-[18px] w-[71px] pb-[2px] text-right text-[14.500px] leading-[20px]">
          <div className="tracking-[-0.050px]">8:53 PM</div>
          <div>2/19/2025</div>
        </div>
        <svg viewBox="0 0 16 20" className="mr-[27px] ml-[11px] h-5 w-4" fill="#99ebff"><path d="M8 0Q14 0.500 14 7V11L16 15V16H0V15L2 11V7Q2 0.500 8 0ZM5 17.200H11Q10.500 20 8 20T5 17.200Z" /></svg>
      </div>
    </footer>
  );
}

export default function App() {
  return (
    <div className="flex h-[1080px] w-[1920px] flex-col overflow-hidden">
      <TabStrip />
      <Toolbar />
      <div className="flex h-[911px] shrink-0 overflow-hidden">
        <Sidebar />
        <PageBody />
        <Scrollbar />
      </div>
      <Taskbar />
    </div>
  );
}
